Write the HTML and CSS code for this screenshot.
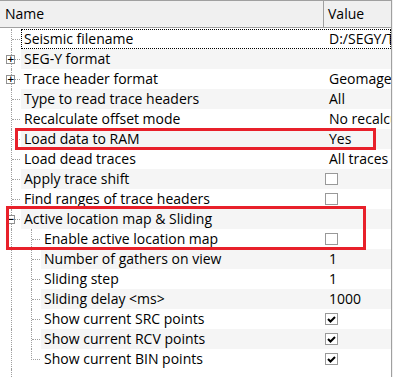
FILE: index.html
```html
<!DOCTYPE html>
<html lang="en">
<head>
    <meta charset="UTF-8">
    <title>Seismic loader properties</title>
    <link rel="stylesheet" href="styles.css">
</head>
<body>
    <div class="panel">
        <div class="header">
            <div class="head-name">Name</div>
            <div class="head-value">Value</div>
        </div>

        <div class="rows">
            <div class="row focus">
                <div class="tree"><span class="vline"></span><span class="stub"></span></div>
                <div class="cells"><div class="label">Seismic filename</div><div class="value">D:/SEGY/Test.sgy</div></div>
            </div>
            <div class="row alt">
                <div class="tree"><span class="vline"></span><span class="box">+</span><span class="stub short"></span></div>
                <div class="cells"><div class="label">SEG-Y format</div><div class="value"></div></div>
            </div>
            <div class="row">
                <div class="tree"><span class="vline"></span><span class="box">+</span><span class="stub short"></span></div>
                <div class="cells"><div class="label">Trace header format</div><div class="value">Geomage</div></div>
            </div>
            <div class="row alt">
                <div class="tree"><span class="vline"></span><span class="stub"></span></div>
                <div class="cells"><div class="label">Type to read trace headers</div><div class="value">All</div></div>
            </div>
            <div class="row">
                <div class="tree"><span class="vline"></span><span class="stub"></span></div>
                <div class="cells"><div class="label">Recalculate offset mode</div><div class="value">No recalculation</div></div>
            </div>
            <div class="row alt">
                <div class="tree"><span class="vline"></span><span class="stub"></span></div>
                <div class="cells"><div class="label">Load data to RAM</div><div class="value">Yes</div></div>
            </div>
            <div class="row">
                <div class="tree"><span class="vline"></span><span class="stub"></span></div>
                <div class="cells"><div class="label">Load dead traces</div><div class="value">All traces</div></div>
            </div>
            <div class="row alt">
                <div class="tree"><span class="vline"></span><span class="stub"></span></div>
                <div class="cells"><div class="label">Apply trace shift</div><div class="value"><span class="check"></span></div></div>
            </div>
            <div class="row">
                <div class="tree"><span class="vline"></span><span class="stub"></span></div>
                <div class="cells"><div class="label">Find ranges of trace headers</div><div class="value"><span class="check"></span></div></div>
            </div>
            <div class="row alt">
                <div class="tree"><span class="vline"></span><span class="box">&minus;</span><span class="stub short"></span></div>
                <div class="cells"><div class="label">Active location map &amp; Sliding</div><div class="value"></div></div>
            </div>
            <div class="row">
                <div class="tree child"><span class="vline"></span><span class="vline inner"></span><span class="stub"></span></div>
                <div class="cells"><div class="label">Enable active location map</div><div class="value"><span class="check"></span></div></div>
            </div>
            <div class="row alt">
                <div class="tree child"><span class="vline"></span><span class="vline inner"></span><span class="stub"></span></div>
                <div class="cells"><div class="label">Number of gathers on view</div><div class="value">1</div></div>
            </div>
            <div class="row">
                <div class="tree child"><span class="vline"></span><span class="vline inner"></span><span class="stub"></span></div>
                <div class="cells"><div class="label">Sliding step</div><div class="value">1</div></div>
            </div>
            <div class="row alt">
                <div class="tree child"><span class="vline"></span><span class="vline inner"></span><span class="stub"></span></div>
                <div class="cells"><div class="label">Sliding delay &lt;ms&gt;</div><div class="value">1000</div></div>
            </div>
            <div class="row">
                <div class="tree child"><span class="vline"></span><span class="vline inner"></span><span class="stub"></span></div>
                <div class="cells"><div class="label">Show current SRC points</div><div class="value"><span class="check on"><svg width="11" height="11" viewBox="0 0 11 11"><path d="M2 5 L4.5 7.5 L9 3" fill="none" stroke="#000" stroke-width="2"/></svg></span></div></div>
            </div>
            <div class="row alt">
                <div class="tree child"><span class="vline"></span><span class="vline inner"></span><span class="stub"></span></div>
                <div class="cells"><div class="label">Show current RCV points</div><div class="value"><span class="check on"><svg width="11" height="11" viewBox="0 0 11 11"><path d="M2 5 L4.5 7.5 L9 3" fill="none" stroke="#000" stroke-width="2"/></svg></span></div></div>
            </div>
            <div class="row">
                <div class="tree child"><span class="vline"></span><span class="corner"></span></div>
                <div class="cells"><div class="label">Show current BIN points</div><div class="value"><span class="check on"><svg width="11" height="11" viewBox="0 0 11 11"><path d="M2 5 L4.5 7.5 L9 3" fill="none" stroke="#000" stroke-width="2"/></svg></span></div></div>
            </div>
            <div class="row tail">
                <div class="tree"><span class="vline"></span></div>
            </div>
        </div>

        <!-- 강조 표시 -->
        <div class="mark mark-ram"></div>
        <div class="mark mark-active"></div>
    </div>
</body>
</html>
```

FILE: styles.css
```css
* {
    margin: 0;
    padding: 0;
    box-sizing: border-box;
}

body {
    background-color: #f0f0f0;
    width: 393px;
    height: 377px;
    overflow: hidden;
    font-family: 'Open Sans', 'Noto Sans', sans-serif;
    font-size: 14px;
    color: #000;
}

.panel {
    position: relative;
    width: 392px;
    height: 377px;
    background: #fff;
    border-right: 1px solid #a0a0a0;
    overflow: hidden;
}

/* 헤더 */
.header {
    display: flex;
    height: 28px;
    background: #f0f0f0;
    border-top: 1px solid #a0a0a0;
    border-bottom: 1px solid #a0a0a0;
}

.head-name {
    width: 324px;
    padding-left: 5px;
    line-height: 25px;
    border-right: 1px solid #a0a0a0;
}

.head-value {
    flex: 1;
    padding-left: 4px;
    line-height: 25px;
}

/* 행 */
.rows {
    padding-top: 1px;
}

.row {
    display: flex;
    height: 20px;
}

.row.tail {
    height: 20px;
}

.cells {
    flex: 1;
    display: flex;
    min-width: 0;
    line-height: 20px;
}

.row.alt .cells {
    background: #f5f5f5;
}

.row.focus .cells {
    outline: 1px dotted #000;
    outline-offset: -1px;
}

.label {
    flex: 1;
    min-width: 0;
    padding-left: 3px;
    white-space: nowrap;
    overflow: hidden;
}

.value {
    width: 67px;
    padding-left: 5px;
    white-space: nowrap;
    overflow: hidden;
    display: flex;
    align-items: center;
}

/* 트리 선 */
.tree {
    display: flex;
    width: 21px;
    flex-shrink: 0;
}

.tree.child {
    width: 41px;
}

.vline {
    margin-left: 11px;
    border-left: 1px dotted #a0a0a0;
}

.vline.inner {
    margin-left: 19px;
}

.stub {
    align-self: center;
    width: 8px;
    border-top: 1px dotted #a0a0a0;
}

.stub.short {
    width: 5px;
}

.corner {
    align-self: flex-start;
    margin-left: 19px;
    width: 9px;
    height: 11px;
    border-left: 1px dotted #a0a0a0;
    border-bottom: 1px dotted #a0a0a0;
}

.box {
    align-self: center;
    margin-left: -6px;
    width: 9px;
    height: 9px;
    border: 1px solid #919191;
    background: #fff;
    font-family: 'DejaVu Sans', sans-serif;
    font-size: 9px;
    line-height: 7px;
    text-align: center;
    font-weight: bold;
}

/* 체크박스 */
.check {
    margin-left: -4px;
    width: 13px;
    height: 12px;
    border: 1px solid #999;
    background: #fff;
    display: flex;
    align-items: center;
    justify-content: center;
}

/* 빨간 강조 상자 */
.mark {
    position: absolute;
    border: 3px solid #e8202a;
}

.mark-ram {
    left: 15px;
    top: 128px;
    width: 361px;
    height: 22px;
}

.mark-active {
    left: 6px;
    top: 206px;
    width: 360px;
    height: 44px;
}
```
